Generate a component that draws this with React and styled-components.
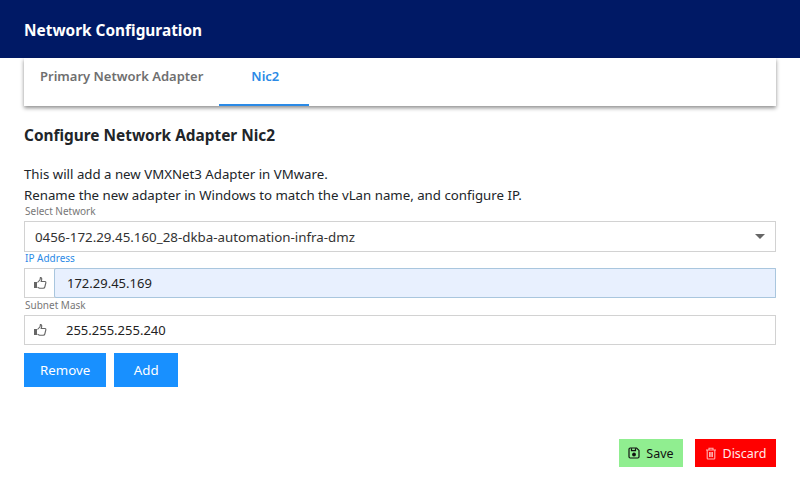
import React from "react";
import styled, { createGlobalStyle } from "styled-components";

const Global = createGlobalStyle`
  html, body { margin: 0; padding: 0; background: #fff; }
  body { font-family: "Noto Sans", "Open Sans", sans-serif; color: #212529; }
  * { box-sizing: border-box; }
`;
const Page = styled.div`width: 800px; height: 491px; display: flex; flex-direction: column; overflow: hidden;`;
const Header = styled.header`
  height: 58px; background: #001965; color: #fff; display: flex; align-items: center;
  padding: 2px 24px 0; font-size: 15.4px; font-weight: 700;
`;
const Body = styled.main`flex: 1; padding: 0 24px; display: flex; flex-direction: column;`;
const TabBar = styled.nav`
  height: 48px; display: flex; background: #fff;
  box-shadow: 0 2px 4px rgba(0,0,0,.45);
`;
const Tab = styled.div`
  height: 48px; padding: 8px 16px 0; font-size: 13px; font-weight: 600; line-height: 20px;
  color: ${p => (p.$active ? "#2b8ae6" : "#6f6f6f")};
  border-bottom: 2px solid ${p => (p.$active ? "#2b8ae6" : "transparent")};
`;
const TabWide = styled(Tab)`width: 90px; padding-left: 32px; padding-right: 0;`;
const Title = styled.h2`margin: 20px 0 0; font-size: 15.4px; line-height: 20px; font-weight: 700; color: #212529;`;
const Para = styled.p`margin: ${p => p.$mt}px 0 0; font-size: 13.25px; line-height: 22px; color: #212529;`;
const Label = styled.label`
  display: block; font-size: 10px; line-height: 10px; height: 10px; margin-bottom: 5px; padding-left: 1px;
  color: ${p => (p.$active ? "#2b8ae6" : "#777")};
`;
const FieldBox = styled.div`
  height: 30px; display: flex; align-items: stretch; background: #fff;
  border: 1px solid #d2d2d2; margin-bottom: 2px;
`;
const SelectBox = styled(FieldBox)`
  height: 31px; margin-bottom: 1px; justify-content: space-between; align-items: center;
  padding: 0 10px; font-size: 13.33px; color: #333;
`;
const Caret = styled.span`
  width: 0; height: 0; border-left: 5.5px solid transparent; border-right: 5.5px solid transparent;
  border-top: 5.5px solid #666;
`;
const IconCell = styled.div`
  width: 29px; display: flex; align-items: center; justify-content: center; color: #666; flex: none;
`;
const Value = styled.div`
  flex: 1; display: flex; align-items: center; padding-left: 12px; font-size: 13px; color: #222;
  ${p => p.$focus && `background: #e8f0fe; margin: -1px -1px -1px 0; border: 1px solid #a9c6de; border-radius: 2px 0 0 2px;`}
`;
const Actions = styled.div`display: flex; gap: 8px; margin-top: 6px;`;
const Primary = styled.button`
  height: 34px; min-width: 64px; padding: 0 16px; border: 0; background: #1890ff; color: #fff;
  font: 400 13.3px "Noto Sans", sans-serif;
`;
const Footer = styled.div`display: flex; justify-content: flex-end; gap: 12px; margin-top: 52px;`;
const FootButton = styled.button`
  height: 28px; display: flex; align-items: center; justify-content: center; gap: 6px; border: 0; padding: 0;
  width: ${p => p.$w}px; background: ${p => p.$bg}; color: ${p => p.$fg};
  font: 400 12.5px "Noto Sans", sans-serif;
`;

const Thumb = () => (
  <svg width="14" height="14" viewBox="0 0 14 14" fill="none" stroke="currentColor" strokeWidth="1.1">
    <rect x="1" y="6" width="3" height="6" fill="currentColor" stroke="none" />
    <path d="M4.5 6.5 L7 3.8 L7.4 1.6 C8.6 1.4 9 2.6 8.6 4 L8.2 5.5 L12 5.5 C12.8 5.5 13 6.2 12.8 7 L11.8 11 C11.6 11.8 11.1 12.2 10.3 12.2 L6.5 12.2 L4.5 11.3" />
  </svg>
);
const Floppy = () => (
  <svg width="12" height="12" viewBox="0 0 12 12" fill="none" stroke="currentColor" strokeWidth="1.2">
    <path d="M1 2.2 C1 1.5 1.5 1 2.2 1 H8.6 L11 3.4 V9.8 C11 10.5 10.5 11 9.8 11 H2.2 C1.5 11 1 10.5 1 9.8 Z" />
    <path d="M3.5 1.2 V3.6 H7.5 V1.2" />
    <circle cx="6" cy="7.5" r="1.3" fill="currentColor" />
  </svg>
);
const Trash = () => (
  <svg width="12" height="13" viewBox="0 0 12 13" fill="none" stroke="#ffb3b3" strokeWidth="1.1">
    <path d="M1 3 H11 M4 3 V1.2 H8 V3 M2.2 3 V11.2 C2.2 11.7 2.6 12 3 12 H9 C9.4 12 9.8 11.7 9.8 11.2 V3 M4.6 5 V10 M6 5 V10 M7.4 5 V10" />
  </svg>
);

export default function App() {
  return (
    <Page>
      <Global />
      <Header>Network Configuration</Header>
      <Body>
        <TabBar>
          <Tab>Primary Network Adapter</Tab>
          <TabWide $active>Nic2</TabWide>
        </TabBar>
        <Title>Configure Network Adapter Nic2</Title>
        <Para $mt={17}>This will add a new VMXNet3 Adapter in VMware.</Para>
        <Para $mt={-1}>Rename the new adapter in Windows to match the vLan name, and configure IP.</Para>
        <Label>Select Network</Label>
        <SelectBox>0456-172.29.45.160_28-dkba-automation-infra-dmz<Caret /></SelectBox>
        <Label $active>IP Address</Label>
        <FieldBox>
          <IconCell><Thumb /></IconCell>
          <Value $focus>172.29.45.169</Value>
        </FieldBox>
        <Label>Subnet Mask</Label>
        <FieldBox>
          <IconCell><Thumb /></IconCell>
          <Value>255.255.255.240</Value>
        </FieldBox>
        <Actions>
          <Primary>Remove</Primary>
          <Primary>Add</Primary>
        </Actions>
        <Footer>
          <FootButton $w={64} $bg="#90ee90" $fg="#111"><Floppy />Save</FootButton>
          <FootButton $w={81} $bg="#ff0000" $fg="#ffe9e9"><Trash />Discard</FootButton>
        </Footer>
      </Body>
    </Page>
  );
}
